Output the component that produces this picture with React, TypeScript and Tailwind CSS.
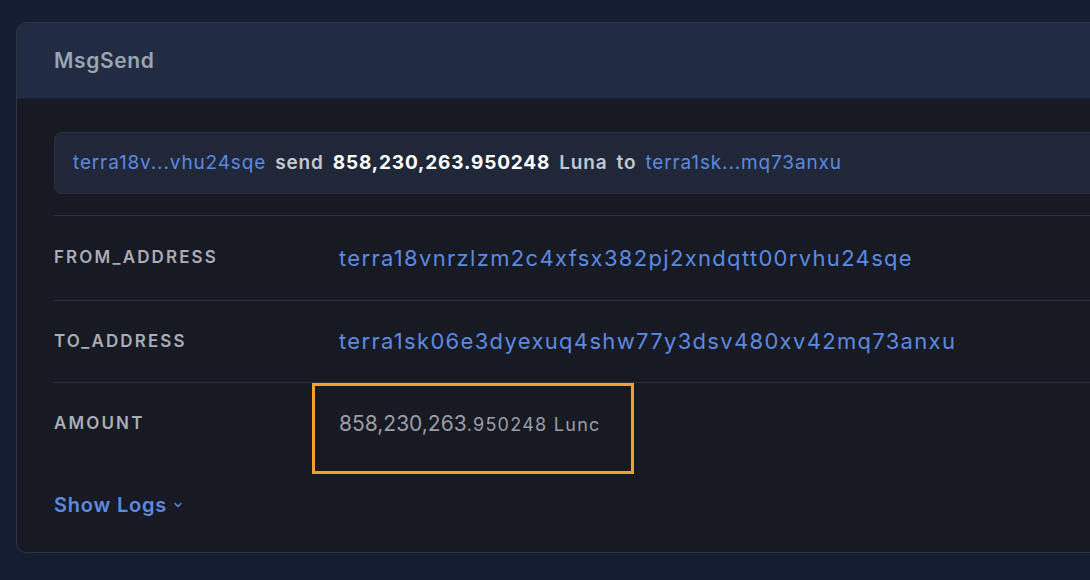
const font = { fontFamily: '"Inter", "Liberation Sans", sans-serif' };

function Row({ label, children, h, last }: { label: string; children: React.ReactNode; h: string; last?: boolean }) {
  return (
    <div className={`flex items-center ${h} ${last ? "" : "border-b border-[#2c313d]"}`}>
      <div className="w-[285px] shrink-0 text-[17px] font-semibold tracking-[0.125em] text-[#a9adb6]">{label}</div>
      <div className="flex-1">{children}</div>
    </div>
  );
}

export default function App() {
  return (
    <div className="w-[1090px] h-[580px] overflow-hidden bg-[#151d33] pt-[22px] pl-[16px]" style={font}>
      <div className="w-[1200px] h-[531px] rounded-[10px] border border-[#2d3445] bg-[#171923] overflow-hidden flex flex-col">
        {/* header */}
        <div className="h-[76px] shrink-0 bg-[#212b42] flex items-center px-[37px] border-b border-[#1a2030]">
          <span className="text-[21px] font-semibold tracking-[0.03em] text-[#9ba4b3]">MsgSend</span>
        </div>

        <div className="pl-[37px] pt-[33px]">
          {/* summary */}
          <div className="h-[62px] rounded-[8px] bg-[#1f2738] border border-[#283042] flex items-center px-[18px] gap-[9px] text-[19px] tracking-[0.045em]">
            <span className="text-[#5b8ae0]">terra18v...vhu24sqe</span>
            <span className="font-semibold text-[#c3c7cf]">send</span>
            <span className="font-bold text-white">858,230,263.950248</span>
            <span className="font-semibold text-[#c3c7cf]">Luna</span>
            <span className="font-semibold text-[#c3c7cf]">to</span>
            <span className="text-[#5b8ae0]">terra1sk...mq73anxu</span>
          </div>

          <div className="mt-[21px] border-t border-[#2c313d]">
            <Row label="FROM_ADDRESS" h="h-[85px]">
              <span className="text-[22px] tracking-[0.06em] text-[#5b8ae0]">terra18vnrzlzm2c4xfsx382pj2xndqtt00rvhu24sqe</span>
            </Row>
            <Row label="TO_ADDRESS" h="h-[82px]">
              <span className="text-[22px] tracking-[0.06em] text-[#5b8ae0]">terra1sk06e3dyexuq4shw77y3dsv480xv42mq73anxu</span>
            </Row>
            <Row label="AMOUNT" h="h-[82px]" last>
              <div className="relative h-[28px] -mt-[4px] flex items-baseline text-[#9a9ea8]">
                <span className="text-[21px]">858,230,263</span>
                <span className="text-[18px] tracking-[0.07em]">.950248 Lunc</span>
                <div className="absolute left-[-27px] top-[-25px] w-[322px] h-[91px] border-[3px] border-[#f0a035]" />
              </div>
            </Row>
          </div>

          <div className="mt-[25px] flex items-center gap-[5px] text-[20px] font-semibold tracking-[0.04em] text-[#5b8ae0]">
            Show Logs
            <svg width="12" height="12" viewBox="0 0 24 24" fill="none" stroke="currentColor" strokeWidth="3" strokeLinecap="round" strokeLinejoin="round">
              <path d="M6 9l6 6 6-6" />
            </svg>
          </div>
        </div>
      </div>
    </div>
  );
}
